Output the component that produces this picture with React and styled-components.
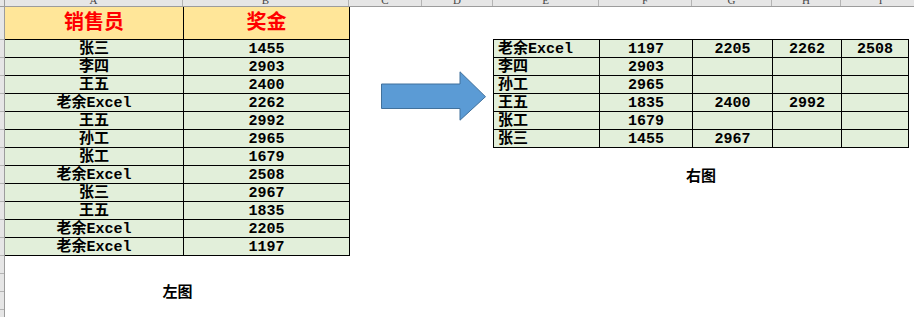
import React from "react";
import styled, { createGlobalStyle } from "styled-components";

const Global = createGlobalStyle`
  html, body { margin: 0; padding: 0; background: #ffffff; overflow: hidden; }
  * { box-sizing: border-box; }
`;

const Page = styled.div`
  width: 914px;
  height: 317px;
  display: grid;
  grid-template-columns: 5px 1fr;
  grid-template-rows: 7px 1fr;
  overflow: hidden;
  background: #fff;
`;

const Corner = styled.div`
  background: #e6e6e6;
  border-right: 1px solid #9c9c9c;
  border-bottom: 1px solid #9c9c9c;
`;

const ColStrip = styled.div`
  display: flex;
  background: #e6e6e6;
  border-bottom: 1px solid #9c9c9c;
  overflow: hidden;
`;

const ColHead = styled.div`
  flex: 0 0 ${(p) => p.$w}px;
  height: 6px;
  border-right: 1px solid #b4b4b4;
  display: flex;
  justify-content: center;
  align-items: flex-end;
  overflow: hidden;
  span {
    font-family: "Liberation Serif", serif;
    font-size: 11px;
    line-height: 11px;
    color: #444;
  }
`;

const RowStrip = styled.div`
  display: flex;
  flex-direction: column;
  background: #e6e6e6;
  border-right: 1px solid #9c9c9c;
  overflow: hidden;
`;

const RowHead = styled.div`
  flex: 0 0 ${(p) => p.$h}px;
  border-bottom: 1px solid #b4b4b4;
`;

const Sheet = styled.div`
  display: flex;
  align-items: flex-start;
  font-family: "Liberation Mono", "Noto Sans CJK SC", monospace;
  font-weight: bold;
  color: #000;
`;

const Block = styled.div`
  display: flex;
  flex-direction: column;
  align-items: center;
  margin-top: ${(p) => p.$top || 0}px;
  margin-left: ${(p) => p.$left || 0}px;
`;

const LeftTable = styled.div`
  display: grid;
  grid-template-columns: 179px 166px;
  grid-template-rows: 33px;
  grid-auto-rows: 18px;
`;

const Cell = styled.div`
  border-right: 1px solid #000;
  border-bottom: 1px solid #000;
  background: ${(p) => (p.$head ? "#ffe699" : "#e2efda")};
  display: flex;
  align-items: center;
  justify-content: ${(p) => (p.$left ? "flex-start" : "center")};
  padding-left: ${(p) => (p.$left ? "4px" : "0")};
  font-size: ${(p) => (p.$head ? "20px" : "15px")};
  line-height: 17px;
  color: ${(p) => (p.$head ? "#ff0000" : "#000")};
  white-space: nowrap;
  overflow: hidden;
  padding-top: ${(p) => (p.$head ? "0" : "2px")};
`;

const RightTable = styled.div`
  display: grid;
  grid-template-columns: 106px 93px 80px 69px 67px;
  grid-auto-rows: 18px;
  border-left: 1px solid #000;
  border-top: 1px solid #000;
`;

const Caption = styled.div`
  margin-top: ${(p) => p.$gap}px;
  font-family: "Noto Sans CJK SC", sans-serif;
  font-weight: bold;
  font-size: 15px;
  line-height: 18px;
  color: #000;
`;

const ArrowWrap = styled.div`
  margin-left: 31px;
  margin-top: 64px;
  width: 106px;
  height: 51px;
  flex: 0 0 auto;
  svg { display: block; }
`;

const cols = [
  ["A", 178], ["B", 166], ["C", 73], ["D", 71], ["E", 106],
  ["F", 93], ["G", 80], ["H", 69], ["I", 80],
];

const leftData = [
  ["张三", "1455"], ["李四", "2903"], ["王五", "2400"], ["老余Excel", "2262"],
  ["王五", "2992"], ["孙工", "2965"], ["张工", "1679"], ["老余Excel", "2508"],
  ["张三", "2967"], ["王五", "1835"], ["老余Excel", "2205"], ["老余Excel", "1197"],
];

const rightData = [
  ["老余Excel", "1197", "2205", "2262", "2508"],
  ["李四", "2903", "", "", ""],
  ["孙工", "2965", "", "", ""],
  ["王五", "1835", "2400", "2992", ""],
  ["张工", "1679", "", "", ""],
  ["张三", "1455", "2967", "", ""],
];

const rowHeights = [33, ...Array(16).fill(18)];

export default function App() {
  return (
    <>
      <Global />
      <Page>
        <Corner />
        <ColStrip>
          {cols.map(([c, w]) => (
            <ColHead key={c} $w={w}><span>{c}</span></ColHead>
          ))}
        </ColStrip>
        <RowStrip>
          {rowHeights.map((h, i) => (
            <RowHead key={i} $h={h} />
          ))}
        </RowStrip>
        <Sheet>
          <Block>
            <LeftTable>
              <Cell $head>销售员</Cell>
              <Cell $head>奖金</Cell>
              {leftData.map(([n, v], i) => (
                <React.Fragment key={i}>
                  <Cell>{n}</Cell>
                  <Cell>{v}</Cell>
                </React.Fragment>
              ))}
            </LeftTable>
            <Caption $gap={26}>左图</Caption>
          </Block>
          <ArrowWrap>
            <svg width="106" height="51" viewBox="0 0 106 51">
              <path
                d="M0.5 13 H79 V0.8 L104.5 25.7 L79 49.2 V37.5 H0.5 Z"
                fill="#5b9bd5"
                stroke="#41719c"
                strokeWidth="1"
              />
            </svg>
          </ArrowWrap>
          <Block $top={32} $left={6}>
            <RightTable>
              {rightData.map((row, i) =>
                row.map((v, j) => (
                  <Cell key={`${i}-${j}`} $left={j === 0}>{v}</Cell>
                ))
              )}
            </RightTable>
            <Caption $gap={18}>右图</Caption>
          </Block>
        </Sheet>
      </Page>
    </>
  );
}
